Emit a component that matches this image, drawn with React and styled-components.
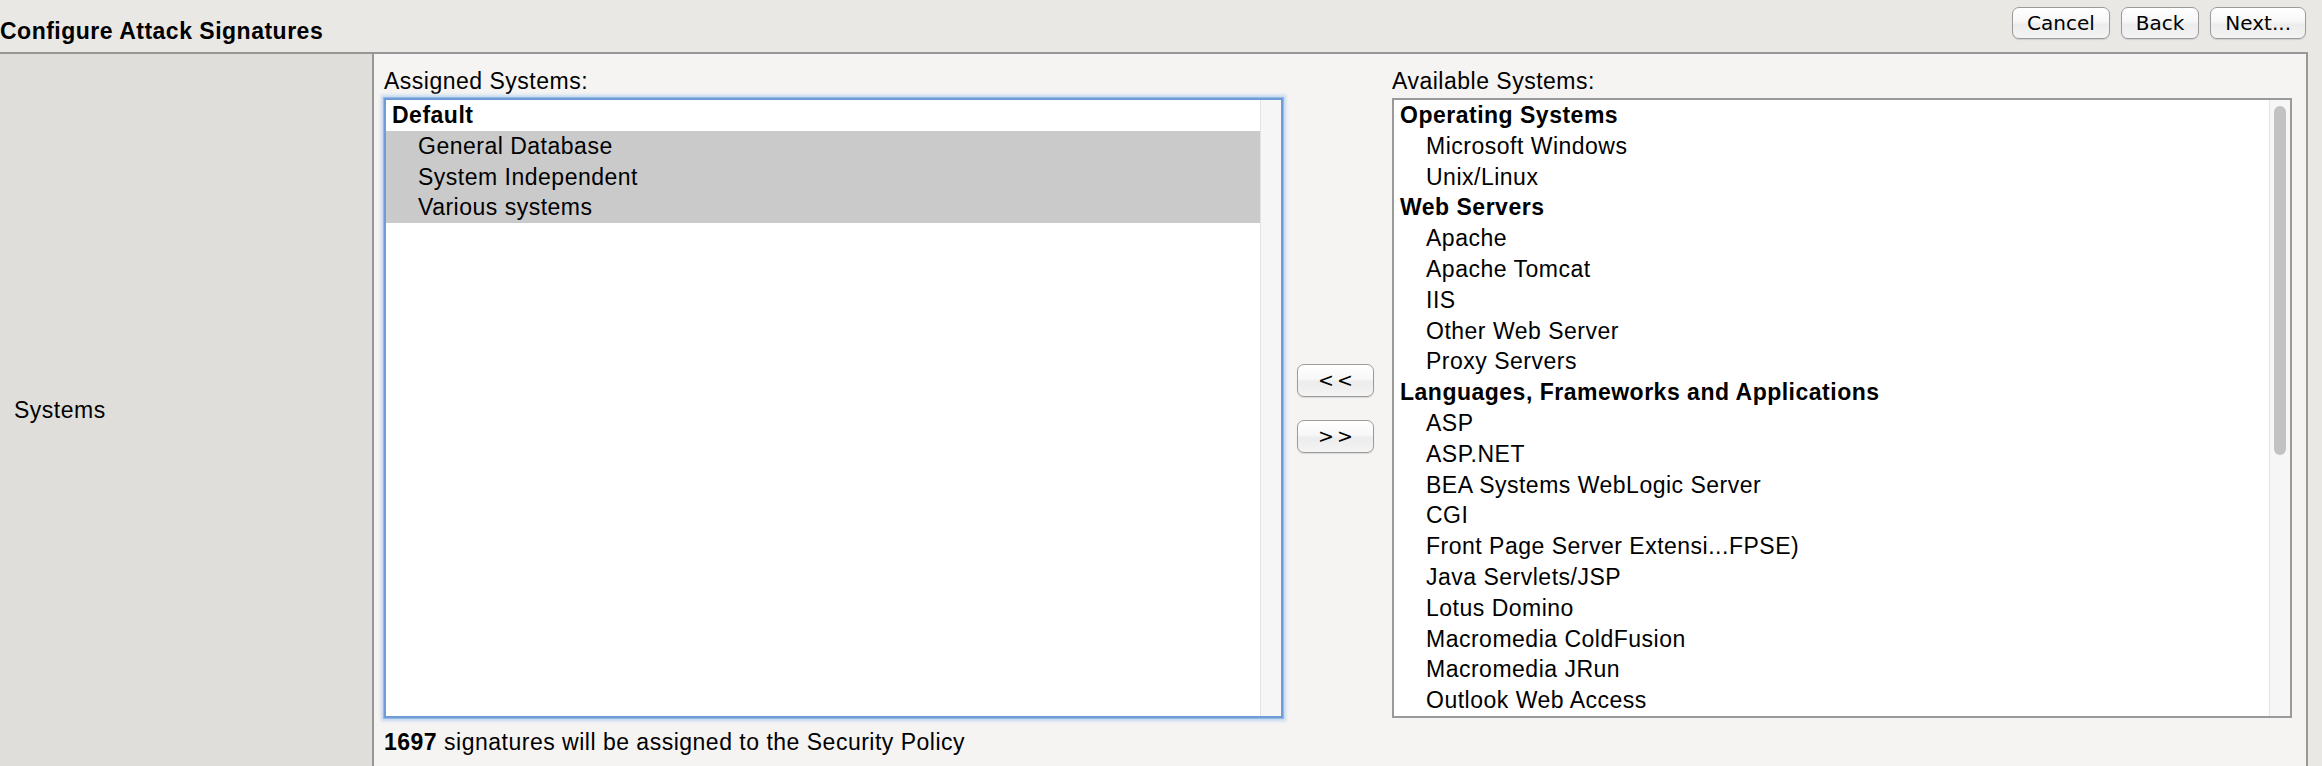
import React from 'react';
import styled, { createGlobalStyle } from 'styled-components';

const assigned = [
    { group: 'Default', items: ['General Database', 'System Independent', 'Various systems'] }
];

const available = [
    { group: 'Operating Systems', items: ['Microsoft Windows', 'Unix/Linux'] },
    { group: 'Web Servers', items: ['Apache', 'Apache Tomcat', 'IIS', 'Other Web Server', 'Proxy Servers'] },
    {
        group: 'Languages, Frameworks and Applications',
        items: [
            'ASP',
            'ASP.NET',
            'BEA Systems WebLogic Server',
            'CGI',
            'Front Page Server Extensi...FPSE)',
            'Java Servlets/JSP',
            'Lotus Domino',
            'Macromedia ColdFusion',
            'Macromedia JRun',
            'Outlook Web Access'
        ]
    }
];

export default function App() {
    function renderGroups(groups, selected) {
        return groups.map((g) => (
            <React.Fragment key={g.group}>
                <Option $group>{g.group}</Option>
                {g.items.map((item) => (
                    <Option key={item} $selected={selected}>{item}</Option>
                ))}
            </React.Fragment>
        ));
    }

    return (
        <Page>
            <GlobalStyle />
            <Header>
                <Title>Configure Attack Signatures</Title>
                <Actions>
                    <MacButton>Cancel</MacButton>
                    <MacButton>Back</MacButton>
                    <MacButton>Next...</MacButton>
                </Actions>
            </Header>
            <Table>
                <LabelCell>Systems</LabelCell>
                <ContentCell>
                    <Columns>
                        <Column>
                            <FieldLabel>Assigned Systems:</FieldLabel>
                            <ListBox $focused>
                                <Options>{renderGroups(assigned, true)}</Options>
                                <Track />
                            </ListBox>
                        </Column>
                        <MoveButtons>
                            <MoveButton>&lt;&lt;</MoveButton>
                            <MoveButton>&gt;&gt;</MoveButton>
                        </MoveButtons>
                        <Column>
                            <FieldLabel>Available Systems:</FieldLabel>
                            <ListBox>
                                <Options>{renderGroups(available, false)}</Options>
                                <Track>
                                    <Thumb />
                                </Track>
                            </ListBox>
                        </Column>
                    </Columns>
                    <Summary>
                        <b>1697</b> signatures will be assigned to the Security Policy
                    </Summary>
                </ContentCell>
            </Table>
        </Page>
    );
}

// ::::::::::Styled-Components::::::::::
const GlobalStyle = createGlobalStyle`
    * {
        box-sizing: border-box;
    }
    body {
        margin: 0;
        background-color: #e9e8e5;
        font-family: "Liberation Sans", Arial, sans-serif;
        overflow: hidden;
    }
`
const Page = styled.div`
    width: 2322px;
    height: 766px;
    background-color: #e9e8e5;
    color: #000000;
    font-size: 23px;
    letter-spacing: 0.5px;
    line-height: 30.8px;
`
const Header = styled.div`
    height: 52px;
    padding: 7px 16px 0 0;

    display: flex;
    justify-content: space-between;
    align-items: flex-start;
`
const Title = styled.h1`
    margin: 9px 0 0 0;
    font-size: 23px;
    font-weight: 700;
    line-height: 30.8px;
`
const Actions = styled.div`
    display: flex;
    gap: 11px;
`
const MacButton = styled.button`
    height: 32px;
    padding: 0 14px;
    border: 1px solid #9b9b9b;
    border-radius: 7px;
    background: linear-gradient(#ffffff 0%, #f7f7f7 45%, #ececec 55%, #f4f4f4 100%);
    box-shadow: 0 1px 1px rgba(0, 0, 0, 0.12);
    font-family: "DejaVu Sans", sans-serif;
    font-size: 20px;
    letter-spacing: 0;
    color: #000000;
`
const Table = styled.div`
    width: 2308px;
    height: 714px;
    border-top: 2px solid #979797;

    display: flex;
`
const LabelCell = styled.div`
    width: 374px;
    padding-left: 14px;
    background-color: #dfdedb;
    border-right: 2px solid #979797;

    display: flex;
    align-items: center;
`
const ContentCell = styled.div`
    flex: 1;
    padding: 12px 14px 9px 10px;
    background-color: #f5f4f2;
    border-right: 2px solid #979797;

    display: flex;
    flex-direction: column;
`
const Columns = styled.div`
    display: flex;
`
const Column = styled.div`
    width: 899px;

    display: flex;
    flex-direction: column;

    &:last-child {
        width: 900px;
    }
`
const FieldLabel = styled.div`
    height: 32px;
`
const ListBox = styled.div`
    height: 620px;
    background-color: #ffffff;
    border: 2px solid ${(p) => (p.$focused ? '#6d9dd6' : '#9a9a9a')};
    box-shadow: ${(p) => (p.$focused ? '0 0 0 1px #93b9e4, 0 0 3px 3px #c3d9f1' : 'none')};
    overflow: hidden;

    display: flex;
`
const Options = styled.div`
    flex: 1;
    overflow: hidden;
`
const Option = styled.div`
    height: 30.8px;
    padding-left: ${(p) => (p.$group ? '6px' : '32px')};
    font-weight: ${(p) => (p.$group ? 700 : 400)};
    background-color: ${(p) => (p.$selected ? '#cacaca' : 'transparent')};
    white-space: nowrap;
`
const Track = styled.div`
    width: 21px;
    background-color: #f6f6f6;
    border-left: 1px solid #e4e4e4;

    display: flex;
    justify-content: center;
`
const Thumb = styled.div`
    width: 12px;
    height: 349px;
    margin-top: 6px;
    border-radius: 6px;
    background-color: #c2c2c2;
`
const MoveButtons = styled.div`
    width: 109px;
    padding: 32px 18px 0 14px;

    display: flex;
    flex-direction: column;
    justify-content: center;
    gap: 23px;
`
const MoveButton = styled(MacButton)`
    width: 77px;
    height: 33px;
    padding: 0;
    font-size: 19px;
    letter-spacing: 3px;
    text-indent: 3px;
`
const Summary = styled.div`
    margin-top: 9px;

    b {
        font-weight: 700;
    }
`
